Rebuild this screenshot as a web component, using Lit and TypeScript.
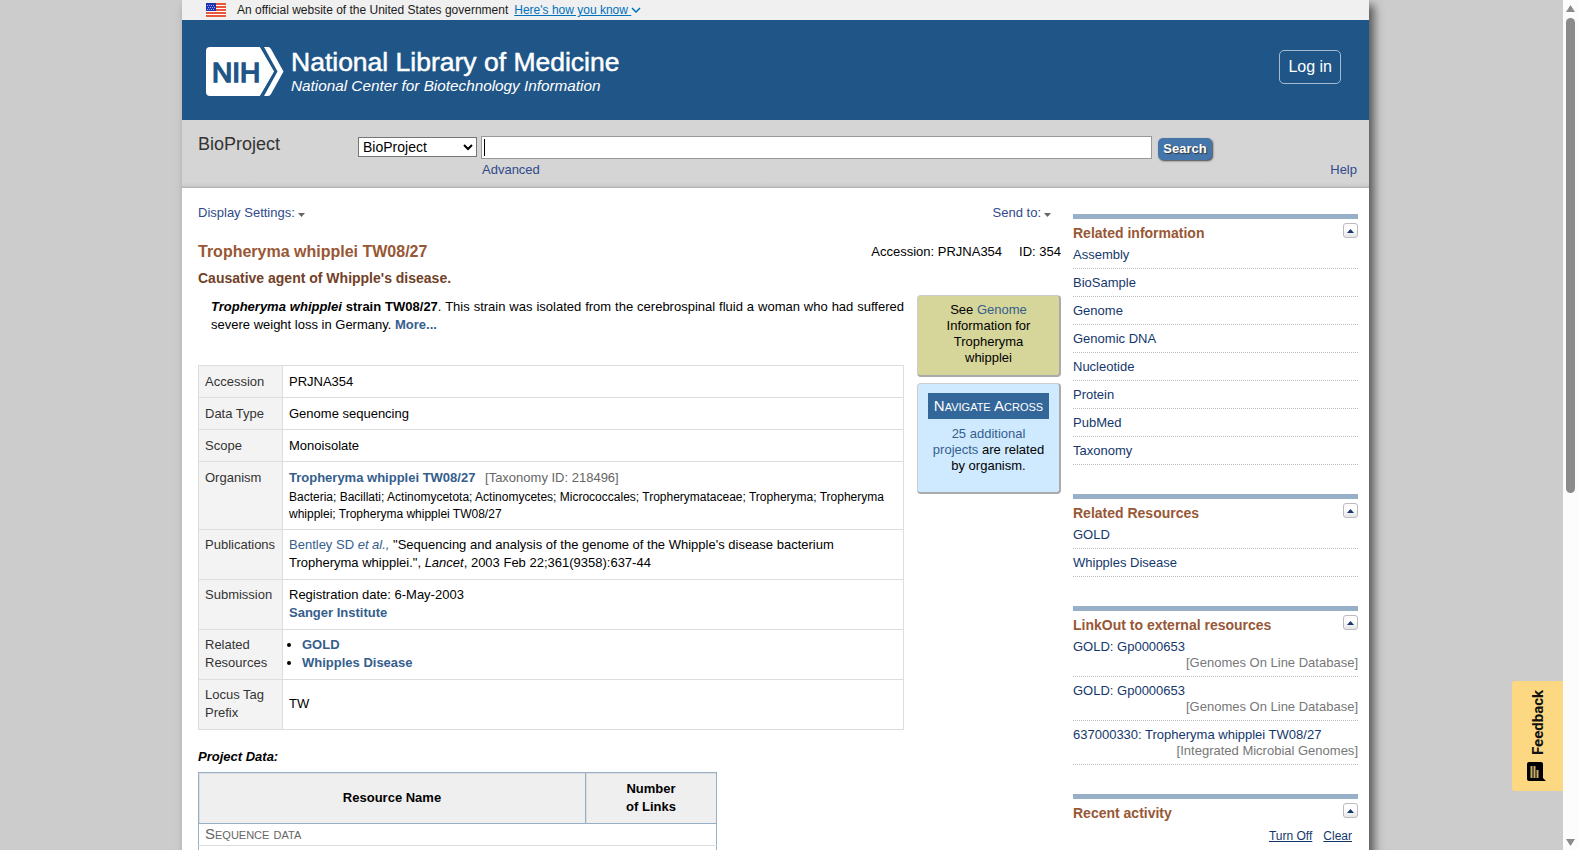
import { LitElement, html, css, svg } from "lit";
import { customElement, property } from "lit/decorators.js";

const stripes = [0, 3, 6, 9, 12];

@customElement("side-portlet")
class SidePortlet extends LitElement {
  @property() heading = "";

  static styles = css`
    :host {
      display: block;
      border-top: 5px solid #97b0c8;
      margin-bottom: 29px;
    }
    .head {
      display: flex;
      justify-content: space-between;
      align-items: flex-start;
      height: 28px;
    }
    .title {
      margin: 0;
      padding-top: 5px;
      font-size: 14px;
      line-height: 18px;
      color: #985735;
    }
    .toggle {
      width: 15px;
      height: 15px;
      box-sizing: border-box;
      padding: 0;
      margin-top: 4px;
      border: 1px solid #bbb;
      border-radius: 3px;
      background: linear-gradient(#fff 40%, #e6e6e6);
      display: flex;
      align-items: center;
      justify-content: center;
    }
  `;

  render() {
    return html`
      <div class="head">
        <h3 class="title">${this.heading}</h3>
        <button class="toggle" aria-label="Collapse ${this.heading}">
          <svg width="7" height="4" viewBox="0 0 7 4"><path d="M0 4 3.500 0 7 4z" fill="#14376c" /></svg>
        </button>
      </div>
      <slot></slot>
    `;
  }
}

@customElement("app-root")
class AppRoot extends LitElement {
  static styles = css`
    :host {
      display: flex;
      height: 100vh;
      overflow: hidden;
      background: #ccc;
      font-family: "Liberation Sans", Arial, sans-serif;
      font-size: 13px;
      line-height: 18px;
      color: #000;
    }
    a {
      color: #2f4a8b;
      text-decoration: none;
    }
    .viewport {
      flex: 1;
      min-width: 0;
      overflow: hidden;
      padding: 0 194px 0 182px;
    }
    .page {
      background: #fff;
      min-height: 100%;
      box-shadow: 5px 5px 9px #555;
    }
    .gov {
      display: flex;
      align-items: center;
      height: 20px;
      padding: 0 24px;
      background: #f0f0f0;
      font-size: 12px;
      color: #1b1b1b;
    }
    .gov svg {
      flex: none;
    }
    .gov .flag {
      margin-right: 11px;
    }
    .gov a {
      margin-left: 6px;
      color: #0071bc;
      text-decoration: underline;
    }
    .brand {
      display: flex;
      align-items: center;
      justify-content: space-between;
      height: 100px;
      padding: 0 28px 0 24px;
      background: #205588;
    }
    .login {
      height: 34px;
      margin-bottom: 6px;
      padding: 0 8px 1px;
      border: 1px solid #a6bbcf;
      border-radius: 5px;
      background: none;
      color: #fff;
      font: 16px "Liberation Sans", Arial, sans-serif;
    }
    .search {
      display: flex;
      align-items: flex-start;
      height: 68px;
      box-sizing: border-box;
      padding: 0 12px 0 16px;
      background: linear-gradient(#d5d5d5 62px, #ccc 66px, #aaa);
    }
    .db {
      width: 160px;
      padding-top: 12px;
      font-size: 18px;
      line-height: 24px;
      color: #333;
    }
    .search select {
      width: 119px;
      height: 20px;
      margin: 17px 4px 0 0;
      padding: 0;
      border: 1px solid #767676;
      background: #fff;
      font: 14px "Liberation Sans", Arial, sans-serif;
      color: #000;
    }
    .field {
      flex: 1;
      max-width: 671px;
      padding-top: 16px;
    }
    .box {
      display: flex;
      align-items: center;
      height: 21px;
      border: 1px solid #999;
      background: #fff;
      padding-left: 2px;
    }
    .box::before {
      content: "";
      width: 1px;
      height: 17px;
      background: #000;
    }
    .box input {
      flex: 1;
      min-width: 0;
      border: 0;
      padding: 0;
      outline: 0;
      background: none;
    }
    .field a {
      display: block;
      padding: 2px 0 0 1px;
    }
    .go {
      width: 54px;
      height: 22px;
      margin: 18px 0 0 6px;
      padding: 0 0 2px;
      border: 0;
      border-radius: 5px;
      background: #4475ab;
      box-shadow: 1px 1px 2px #444;
      color: #fff;
      font: bold 13px "Liberation Sans", Arial, sans-serif;
      text-shadow: 1px 1px 1px #333;
    }
    .help {
      margin: 41px 0 0 auto;
    }
    .content {
      display: flex;
      gap: 12px;
      padding: 0 11px 0 16px;
    }
    .main {
      flex: 1;
      min-width: 0;
    }
    .tools {
      display: flex;
      justify-content: space-between;
      padding: 16px 9px 0 0;
    }
    .caret {
      margin-left: 2px;
    }
    .titlebar {
      display: flex;
      justify-content: space-between;
      align-items: center;
      margin-top: 20px;
      line-height: 20px;
    }
    h1 {
      margin: 0;
      font-size: 16px;
      line-height: 20px;
      color: #985735;
    }
    .ids {
      display: flex;
      gap: 17px;
    }
    h2 {
      margin: 7px 0 8px;
      font-size: 14px;
      line-height: 18px;
      color: #724128;
    }
    .body {
      display: flex;
      gap: 13px;
      align-items: flex-start;
    }
    .left {
      flex: 1;
      min-width: 0;
    }
    .desc {
      margin: 3px 0 31px;
      padding-left: 13px;
      text-align: justify;
    }
    .link,
    .strong {
      color: #355e8d;
    }
    .strong {
      font-weight: bold;
    }
    table {
      border-collapse: collapse;
    }
    .info {
      width: 100%;
    }
    .info th,
    .info td {
      border: 1px solid #ddd;
      padding: 6px 6px 7px;
      text-align: left;
      font-weight: normal;
    }
    .info tr:nth-child(-n + 4) > * {
      padding: 7px 6px 6px;
    }
    .info th {
      width: 71px;
      background: #f3f3f3;
      color: #333;
      vertical-align: top;
    }
    .tax {
      margin-left: 6px;
      color: #666;
    }
    .lineage {
      font-size: 12px;
      line-height: 17px;
      padding-top: 2px;
    }
    .info ul {
      margin: 0;
      padding-left: 13px;
    }
    .sub {
      margin: 18px 0 6px;
      font-style: italic;
      font-weight: bold;
    }
    .data {
      width: 519px;
      border: 1px solid #97b0c8;
    }
    .data th {
      width: 131px;
      box-sizing: border-box;
      height: 51px;
      padding: 0 36px;
      border: 1px solid #97b0c8;
      background: #efefef;
      box-shadow: inset 1px 1px #ddd;
    }
    .data th:first-child {
      width: auto;
    }
    .data td {
      padding: 1px 6px 2px;
      border-bottom: 1px solid #ddd;
      color: #666;
      font-size: 15px;
      font-variant: small-caps;
    }
    .cards {
      display: flex;
      flex-direction: column;
      gap: 6px;
      width: 144px;
    }
    .card {
      box-sizing: border-box;
      padding: 6px 25px 9px;
      border: 1px solid;
      border-width: 1px 2px 2px 1px;
      border-color: #ccc #aaa #aaa #ccc;
      border-radius: 4px;
      background: #d6d69a;
      line-height: 16px;
      text-align: center;
    }
    .card.nav {
      padding: 9px 10px 18px;
      background: #cfeaff;
    }
    .nav h4 {
      margin: 0 0 7px;
      background: #336699;
      color: #fff;
      font-size: 15px;
      font-weight: normal;
      font-variant: small-caps;
      line-height: 26px;
    }
    .side {
      width: 285px;
      padding-top: 26px;
    }
    .side ul {
      margin: 0;
      padding: 0;
      list-style: none;
    }
    .side li {
      border-bottom: 1px dotted #bbb;
      padding-bottom: 5px;
      line-height: 16px;
    }
    .side li + li {
      margin-top: 6px;
    }
    .side li a {
      color: #14376c;
    }
    .side li span {
      display: block;
      text-align: right;
      color: #777;
    }
    .recent {
      display: flex;
      justify-content: flex-end;
      gap: 11px;
      padding-right: 6px;
      font-size: 12px;
      line-height: 18px;
    }
    .recent a {
      color: #14376c;
      text-decoration: underline;
    }
    .scrollbar {
      display: flex;
      flex-direction: column;
      align-items: center;
      width: 15px;
      box-sizing: border-box;
      padding: 5px 0 4px;
      background: #fcfcfc;
    }
    .thumb {
      width: 9px;
      height: 56.5%;
      margin-top: 6px;
      border-radius: 5px;
      background: #8b8b8b;
    }
    .scrollbar svg:last-child {
      margin-top: auto;
    }
    .feedback {
      position: fixed;
      right: 15px;
      bottom: 59px;
      width: 51px;
      height: 110px;
      padding: 0;
      border: 0;
      border-radius: 3px 0 0 3px;
      background: #fcd883;
      display: flex;
      flex-direction: column;
      align-items: center;
      justify-content: center;
      gap: 7px;
      color: #111;
    }
    .feedback span {
      writing-mode: vertical-rl;
      transform: rotate(180deg);
      font: bold 15px Roboto, sans-serif;
    }
  `;

  caret() {
    return html`<svg class="caret" width="9" height="5" viewBox="0 0 9 5"><path d="M1 1h7L4.500 5z" fill="#666" /></svg>`;
  }

  list(items: string[][]) {
    return html`<ul>
      ${items.map(([name, source]) => html`<li><a href="#">${name}</a>${source ? html`<span>[${source}]</span>` : ""}</li>`)}
    </ul>`;
  }

  render() {
    return html`
      <div class="viewport">
        <div class="page">
          <div class="gov">
            <svg class="flag" width="20" height="14" viewBox="0 0 20 14">
              <rect width="20" height="14" fill="#fff" />
              ${stripes.map((y) => svg`<rect y=${y} width="20" height="2" fill="#e8573c" />`)}
              <rect width="10" height="8" fill="#1e33b1" />
              <path d="M1 2.500h8M2 4.500h7M1 6.500h8" stroke="#fff" stroke-dasharray="1 1" opacity=".6" />
            </svg>
            <span>An official website of the United States government</span>
            <a href="#">Here's how you know&nbsp;</a>
            <svg width="10" height="6" viewBox="0 0 10 6"><path d="M1 1l4 4 4-4" fill="none" stroke="#0071bc" stroke-width="1.500" /></svg>
          </div>
          <header class="brand">
            <svg width="425" height="52" viewBox="0 0 425 52" role="img" aria-label="NIH National Library of Medicine">
              <path d="M4 3H54L68.500 27.500 54 52H4Q0 52 0 48V7Q0 3 4 3z" fill="#fff" />
              <path d="M59 3h3q2 0 3 2L77.500 27.500 65 50q-1 2-3 2h-4L71.500 27.500 58 3z" fill="#fff" />
              <path d="M55 2 69.500 27.500 55 53" fill="none" stroke="#205588" stroke-width="2.500" />
              <text x="6" y="38" font-family="Liberation Sans" font-size="28" fill="#205588" stroke="#205588" stroke-width="1.600">NIH</text>
              <text x="85" y="27" font-family="Liberation Sans" font-size="26.500" fill="#fff" stroke="#fff" stroke-width=".5">National Library of Medicine</text>
              <text x="85" y="47" font-family="Liberation Sans" font-style="italic" font-size="15.300" fill="#fff">National Center for Biotechnology Information</text>
            </svg>
            <button class="login">Log in</button>
          </header>
          <form class="search" @submit=${(e: Event) => e.preventDefault()}>
            <div class="db">BioProject</div>
            <select aria-label="Database"><option>BioProject</option></select>
            <div class="field">
              <div class="box"><input type="text" aria-label="Search term" /></div>
              <a href="#">Advanced</a>
            </div>
            <button class="go">Search</button>
            <a class="help" href="#">Help</a>
          </form>
          <div class="content">
            <main class="main">
              <div class="tools">
                <a href="#">Display Settings:${this.caret()}</a>
                <a href="#">Send to:${this.caret()}</a>
              </div>
              <div class="titlebar">
                <h1>Tropheryma whipplei TW08/27</h1>
                <div class="ids"><span>Accession: PRJNA354</span><span>ID: 354</span></div>
              </div>
              <h2>Causative agent of Whipple's disease.</h2>
              <div class="body">
                <div class="left">
                  <p class="desc">
                    <b><i>Tropheryma whipplei</i> strain TW08/27</b>. This strain was isolated from the cerebrospinal
                    fluid a woman who had suffered severe weight loss in Germany. <a class="strong" href="#">More...</a>
                  </p>
                  <table class="info">
                    <tr><th>Accession</th><td>PRJNA354</td></tr>
                    <tr><th>Data Type</th><td>Genome sequencing</td></tr>
                    <tr><th>Scope</th><td>Monoisolate</td></tr>
                    <tr>
                      <th>Organism</th>
                      <td>
                        <a class="strong" href="#">Tropheryma whipplei TW08/27</a> <span class="tax">[Taxonomy ID: 218496]</span>
                        <div class="lineage">
                          Bacteria; Bacillati; Actinomycetota; Actinomycetes; Micrococcales; Tropherymataceae; Tropheryma;
                          Tropheryma whipplei; Tropheryma whipplei TW08/27
                        </div>
                      </td>
                    </tr>
                    <tr>
                      <th>Publications</th>
                      <td>
                        <a class="link" href="#">Bentley SD <i>et al.,</i></a> "Sequencing and analysis of the genome of the
                        Whipple's disease bacterium<br />Tropheryma whipplei.", <i>Lancet</i>, 2003 Feb 22;361(9358):637-44
                      </td>
                    </tr>
                    <tr>
                      <th>Submission</th>
                      <td>Registration date: 6-May-2003<br /><a class="strong" href="#">Sanger Institute</a></td>
                    </tr>
                    <tr>
                      <th>Related Resources</th>
                      <td>
                        <ul>
                          <li><a class="strong" href="#">GOLD</a></li>
                          <li><a class="strong" href="#">Whipples Disease</a></li>
                        </ul>
                      </td>
                    </tr>
                    <tr><th>Locus Tag Prefix</th><td>TW</td></tr>
                  </table>
                  <div class="sub">Project Data:</div>
                  <table class="data">
                    <tr><th>Resource Name</th><th>Number of Links</th></tr>
                    <tr><td colspan="2">Sequence data</td></tr>
                    <tr><td colspan="2">&nbsp;</td></tr>
                  </table>
                </div>
                <div class="cards">
                  <div class="card">See <a class="link" href="#">Genome</a> Information for Tropheryma whipplei</div>
                  <div class="card nav">
                    <h4>Navigate Across</h4>
                    <a class="link" href="#">25 additional projects</a> are related by organism.
                  </div>
                </div>
              </div>
            </main>
            <aside class="side">
              <side-portlet heading="Related information">
                ${this.list([["Assembly"], ["BioSample"], ["Genome"], ["Genomic DNA"], ["Nucleotide"], ["Protein"], ["PubMed"], ["Taxonomy"]])}
              </side-portlet>
              <side-portlet heading="Related Resources">${this.list([["GOLD"], ["Whipples Disease"]])}</side-portlet>
              <side-portlet heading="LinkOut to external resources">
                ${this.list([
                  ["GOLD: Gp0000653", "Genomes On Line Database"],
                  ["GOLD: Gp0000653", "Genomes On Line Database"],
                  ["637000330: Tropheryma whipplei TW08/27", "Integrated Microbial Genomes"],
                ])}
              </side-portlet>
              <side-portlet heading="Recent activity">
                <div class="recent"><a href="#">Turn Off</a><a href="#">Clear</a></div>
              </side-portlet>
            </aside>
          </div>
        </div>
      </div>
      <div class="scrollbar" aria-hidden="true">
        <svg width="9" height="7" viewBox="0 0 9 7"><path d="M4.500 0 9 7H0z" fill="#8b8b8b" /></svg>
        <div class="thumb"></div>
        <svg width="9" height="7" viewBox="0 0 9 7"><path d="M0 0h9L4.500 7z" fill="#8b8b8b" /></svg>
      </div>
      <button class="feedback">
        <span>Feedback</span>
        <svg width="21" height="20" viewBox="0 0 21 20">
          <path d="M2 0h12q2 0 2 2v14l3 3H2q-2 0-2-2V2q0-2 2-2z" fill="#000" />
          <path d="M4.500 4v12M7.500 4v12M10.500 8v8" stroke="#c9ac68" stroke-width="2" />
        </svg>
      </button>
    `;
  }
}
